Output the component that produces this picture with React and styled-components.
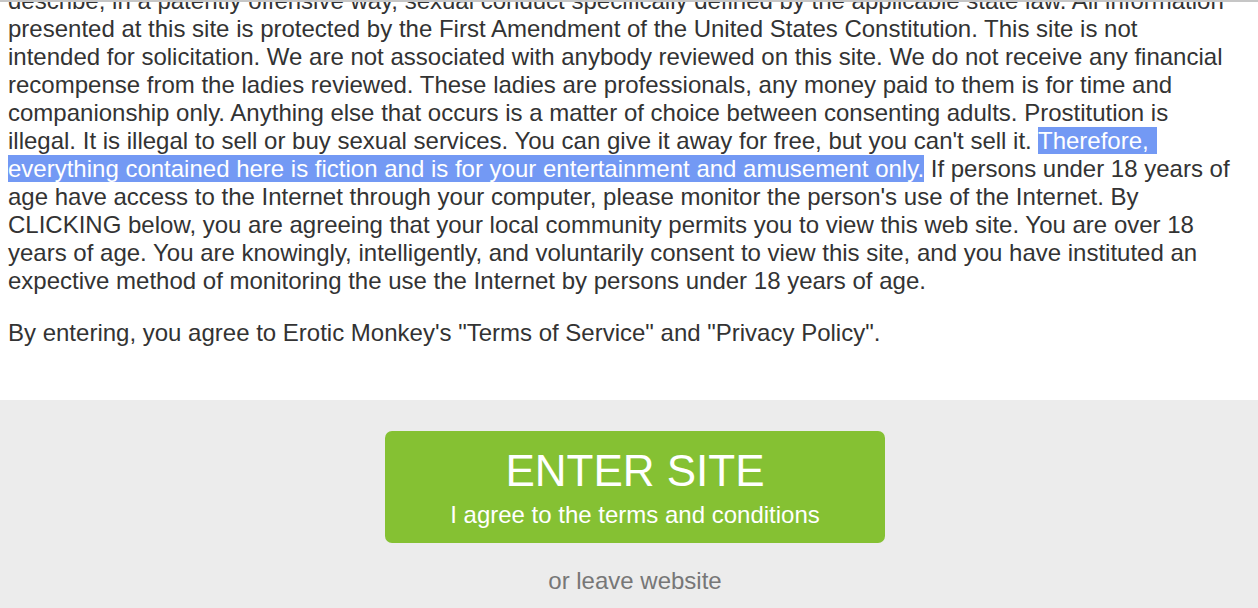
import React, { useLayoutEffect, useRef } from "react";
import styled, { createGlobalStyle } from "styled-components";

const GlobalStyle = createGlobalStyle`
  html, body {
    margin: 0;
    padding: 0;
    background: #ececec;
    overflow: hidden;
  }
  body {
    font-family: "Liberation Sans", Arial, sans-serif;
  }
`;

const Page = styled.div`
  display: flex;
  flex-direction: column;
  width: 1270px;
  min-height: 608px;
  background: #ececec;
`;

const TermsBox = styled.div`
  height: 400px;
  box-sizing: border-box;
  background: #fff;
  border-top: 2px solid #c6c6c6;
  overflow-y: scroll;
  overflow-x: hidden;
  color: #333;
  font-size: 24px;
  line-height: 28px;

  &::-webkit-scrollbar {
    width: 17px;
  }
  &::-webkit-scrollbar-track {
    background: #f1f1f1;
    border-left: 1px solid #e6e6e6;
  }
  &::-webkit-scrollbar-thumb {
    background: #c1c1c1;
    border-left: 3px solid #f1f1f1;
    border-right: 2px solid #f1f1f1;
  }
  &::-webkit-scrollbar-button:single-button {
    display: block;
    height: 17px;
    background: #f1f1f1;
  }
`;

const TermsContent = styled.div`
  padding: 0 8px 29px;
`;

const Title = styled.h2`
  margin: 0 0 20px;
  padding-top: 20px;
  font-size: 30px;
  line-height: 36px;
  font-weight: bold;
  color: #222;
`;

const Para = styled.p`
  margin: 0 0 24px;
  white-space: ${(p) => (p.$fixedLines ? "nowrap" : "normal")};
`;

const Highlight = styled.mark`
  background: #7399f4;
  color: #fff;
  padding-right: ${(p) => (p.$trail ? "8px" : "0")};
`;

const Footer = styled.div`
  display: flex;
  flex-direction: column;
  align-items: center;
  padding-top: 31px;
`;

const EnterButton = styled.button`
  width: 500px;
  height: 112px;
  box-sizing: border-box;
  padding: 18px 0 16px;
  border: none;
  border-radius: 7px;
  background: #85c133;
  color: #fff;
  font-family: "Liberation Sans", Arial, sans-serif;
  display: flex;
  flex-direction: column;
  align-items: center;
  gap: 10px;
  cursor: pointer;
`;

const ButtonTitle = styled.span`
  font-size: 44px;
  line-height: 44px;
`;

const ButtonSub = styled.span`
  font-size: 24px;
  line-height: 24px;
`;

const LeaveLink = styled.a`
  margin-top: 24px;
  font-size: 24px;
  line-height: 28px;
  color: #777;
  text-decoration: none;
`;

export default function App() {
  const boxRef = useRef(null);

  useLayoutEffect(() => {
    const el = boxRef.current;
    if (el) el.scrollTop = el.scrollHeight;
  }, []);

  return (
    <>
      <GlobalStyle />
      <Page>
        <TermsBox ref={boxRef}>
          <TermsContent>
            <Title>Disclaimer</Title>
            <Para $fixedLines>
              This website contains adult material and is intended only for adults who are at least 18 years of age or the
              <br />
              age of majority in their jurisdiction, whichever is greater. If you are under the age of 18, or if it is illegal
              <br />
              to view adult material in your community, please leave now. By entering this site you certify that you are
              <br />
              an adult and that you wish to view material of an adult nature. The materials available on this website
              <br />
              include descriptions of adult activity and must not be accessed by anyone who is younger than 18 years old.
              <br />
              You agree that you will not permit any person under 18 years of age to have access to any of the materials
              <br />
              contained within this site. You are choosing to view these materials of your own free will. You believe that,
              <br />
              as an adult, it is your right to read and/or view any type of material that you choose, and that the viewing,
              <br />
              reading, and downloading of such materials does not violate the standards of your community, town, city,
              <br />
              state or country. You will not hold the creators of this website or its employees responsible for any materials
              <br />
              located on this website. This site contains material that some may consider obscene, which the average
              <br />
              person applying contemporary community standards would find, taken as a whole, depicts or
              <br />
              describe, in a patently offensive way, sexual conduct specifically defined by the applicable state law. All information
              <br />
              presented at this site is protected by the First Amendment of the United States Constitution. This site is not
              <br />
              intended for solicitation. We are not associated with anybody reviewed on this site. We do not receive any financial
              <br />
              recompense from the ladies reviewed. These ladies are professionals, any money paid to them is for time and
              <br />
              companionship only. Anything else that occurs is a matter of choice between consenting adults. Prostitution is
              <br />
              illegal. It is illegal to sell or buy sexual services. You can give it away for free, but you can't sell it.{" "}
              <Highlight $trail>Therefore,</Highlight>
              <br />
              <Highlight>everything contained here is fiction and is for your entertainment and amusement only.</Highlight> If persons under 18 years of
              <br />
              age have access to the Internet through your computer, please monitor the person's use of the Internet. By
              <br />
              CLICKING below, you are agreeing that your local community permits you to view this web site. You are over 18
              <br />
              years of age. You are knowingly, intelligently, and voluntarily consent to view this site, and you have instituted an
              <br />
              expective method of monitoring the use the Internet by persons under 18 years of age.
            </Para>
            <Para>
              By entering, you agree to Erotic Monkey's "Terms of Service" and "Privacy Policy".
            </Para>
          </TermsContent>
        </TermsBox>
        <Footer>
          <EnterButton type="button">
            <ButtonTitle>ENTER SITE</ButtonTitle>
            <ButtonSub>I agree to the terms and conditions</ButtonSub>
          </EnterButton>
          <LeaveLink href="#">or leave website</LeaveLink>
        </Footer>
      </Page>
    </>
  );
}
